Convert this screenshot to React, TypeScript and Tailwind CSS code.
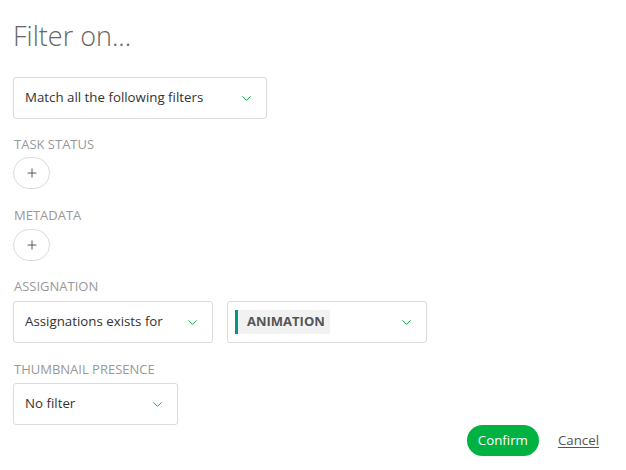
import { ChevronDown, Plus } from "lucide-react";

const font = { fontFamily: '"Open Sans", "Noto Sans", sans-serif' };

function Select({ label, width }: { label: string; width: string }) {
  return (
    <div
      className={`flex h-[42px] ${width} items-center justify-between rounded-[3px] border border-[#dcdcdc] bg-white pl-[11px] pr-[12px]`}
    >
      <span className="text-[13.3px] text-[#333]">{label}</span>
      <ChevronDown className="h-[15px] w-[15px] text-[#00b242]" strokeWidth={1.6} />
    </div>
  );
}

function Label({ children }: { children: string }) {
  return (
    <div className="pl-px text-[13px] uppercase leading-[16px] text-[#999]">
      {children}
    </div>
  );
}

function AddButton() {
  return (
    <button className="flex h-[32px] w-[37px] items-center justify-center rounded-full border border-[#dcdcdc] bg-white text-[#333]">
      <Plus className="h-[14px] w-[14px]" strokeWidth={1.4} />
    </button>
  );
}

export default function App() {
  return (
    <div className="h-[470px] w-[626px] bg-white px-[13px]" style={font}>
      <h1 className="pt-[17px] text-[27px] font-light leading-[38px] text-[#666]">
        Filter on...
      </h1>

      <div className="mt-[22px]">
        <Select label="Match all the following filters" width="w-[254px]" />
      </div>

      <div className="mt-[17px] flex flex-col gap-[5px]">
        <Label>Task status</Label>
        <AddButton />
      </div>

      <div className="mt-[18px] flex flex-col gap-[6px]">
        <Label>Metadata</Label>
        <AddButton />
      </div>

      <div className="mt-[17px] flex flex-col gap-[7px]">
        <Label>Assignation</Label>
        <div className="flex gap-[14px]">
          <Select label="Assignations exists for" width="w-[200px]" />
          <div className="flex h-[42px] w-[200px] items-center justify-between rounded-[3px] border border-[#dcdcdc] bg-white pl-[7px] pr-[12px]">
            <div className="flex h-[24px] items-stretch">
              <div className="w-[3px] bg-[#00968a]" />
              <div className="flex w-[92px] items-center bg-[#f2f2f2] pl-[9px] text-[13px] font-bold text-[#555]">
                ANIMATION
              </div>
            </div>
            <ChevronDown className="h-[15px] w-[15px] text-[#00b242]" strokeWidth={1.6} />
          </div>
        </div>
      </div>

      <div className="mt-[18px] flex flex-col gap-[6px]">
        <Label>Thumbnail presence</Label>
        <Select label="No filter" width="w-[165px]" />
      </div>

      <div className="flex items-center justify-end gap-[19px] pr-[14px]">
        <button className="h-[31px] w-[72px] rounded-full bg-[#00b242] text-[13.3px] text-white">
          Confirm
        </button>
        <button className="text-[13.3px] text-[#555] underline underline-offset-2">Cancel</button>
      </div>
    </div>
  );
}
